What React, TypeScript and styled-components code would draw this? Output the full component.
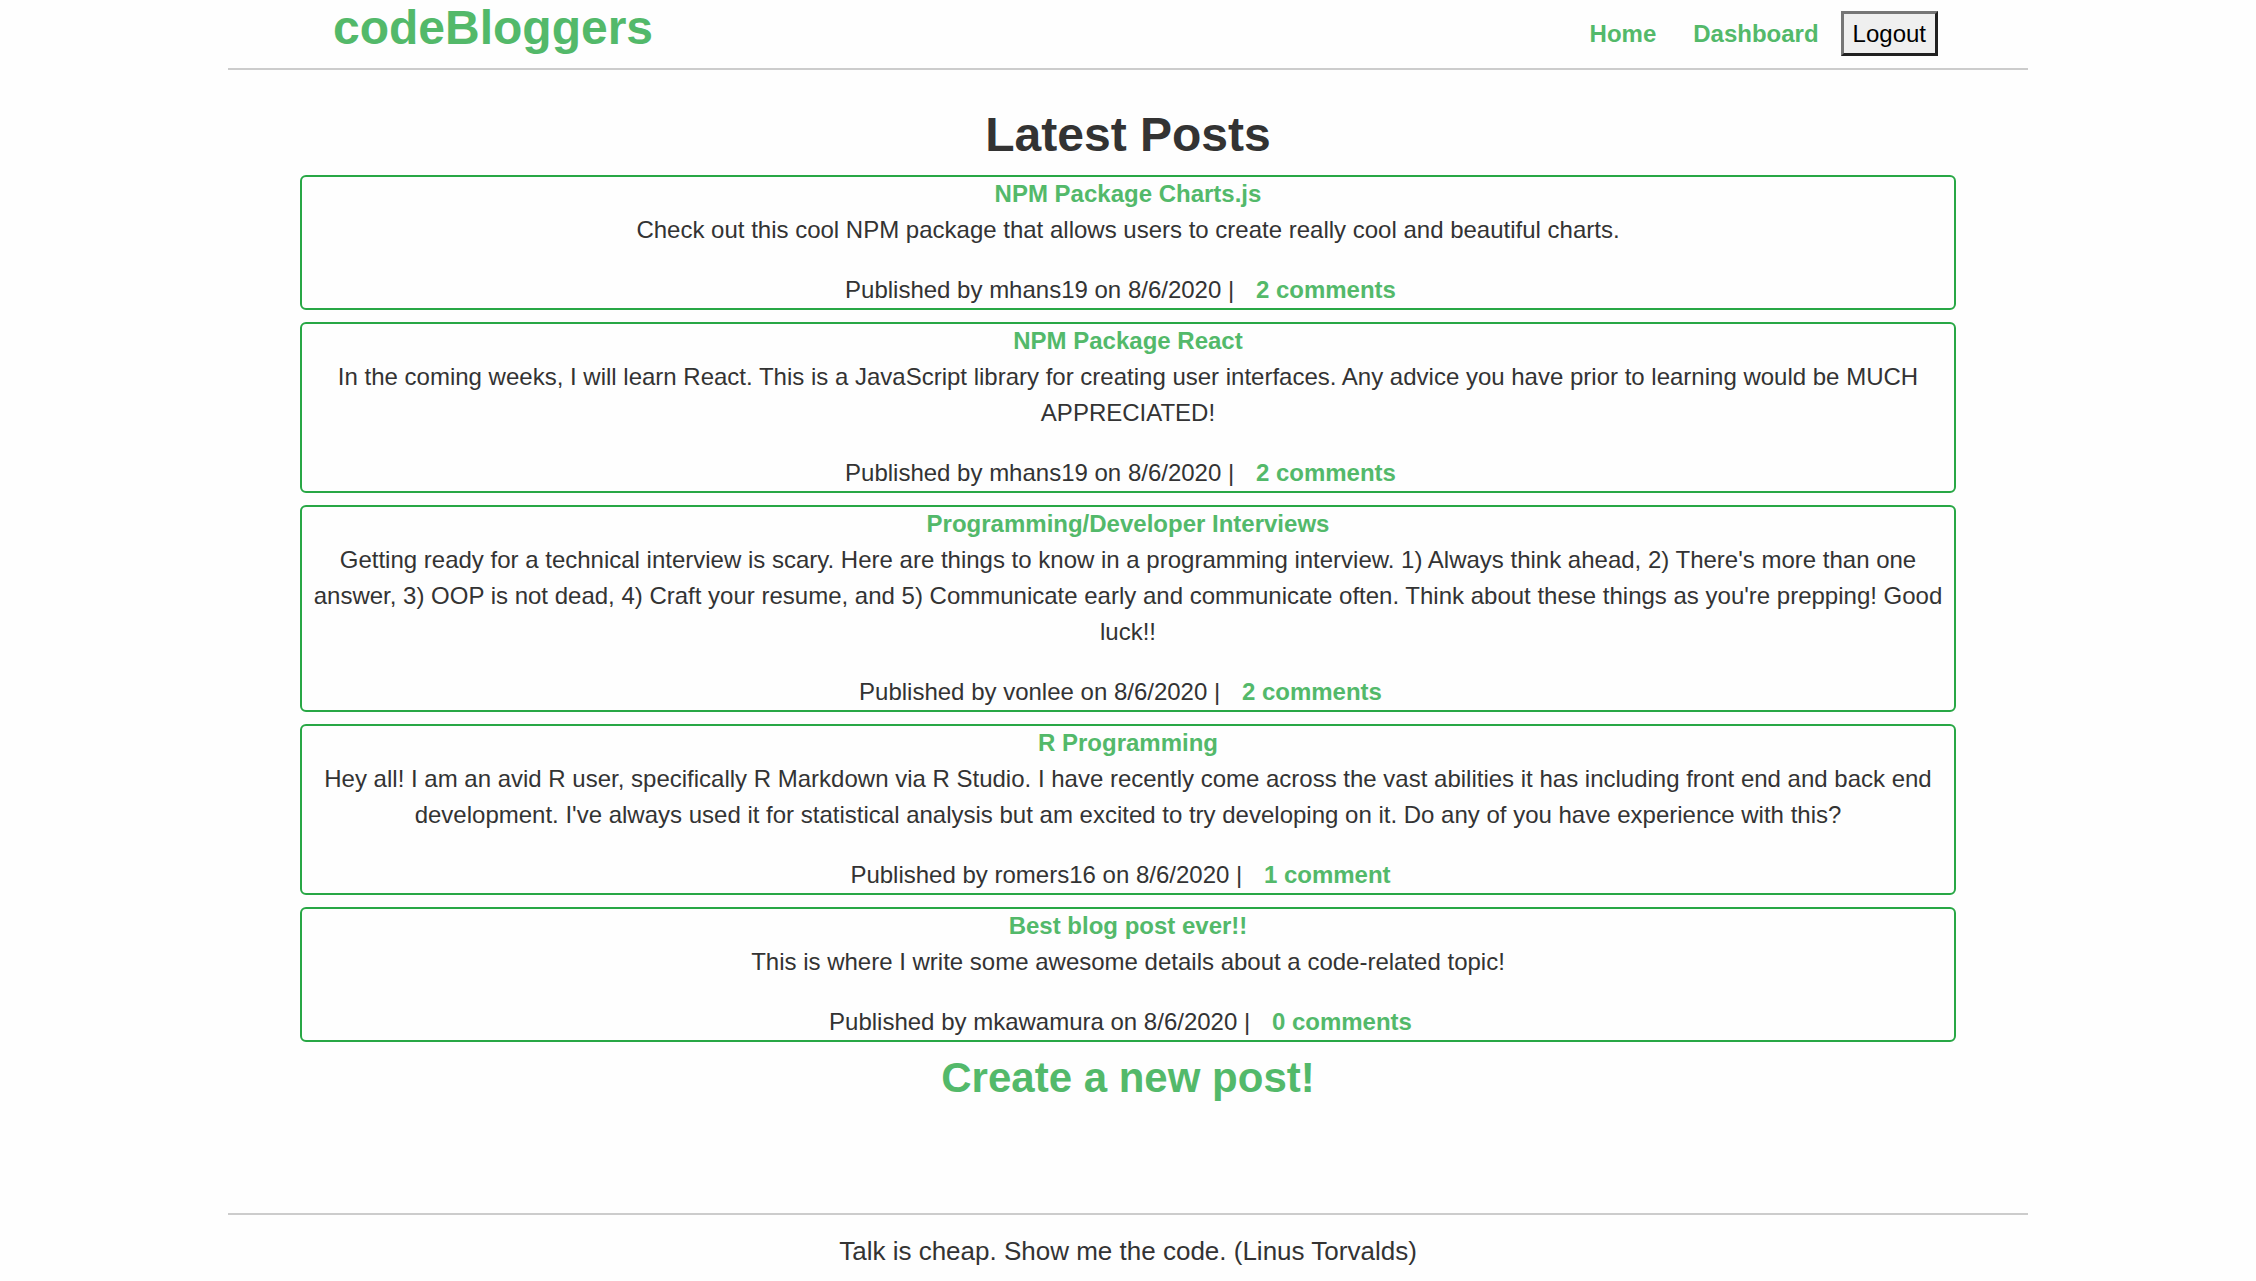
import React from "react";
import styled, { createGlobalStyle } from "styled-components";

const GlobalStyle = createGlobalStyle`
  *, *::before, *::after { box-sizing: border-box; }
  body {
    margin: 0;
    background: #fefefe;
    color: #333;
    font-family: "Liberation Sans", Arial, Helvetica, sans-serif;
    font-size: 24px;
    line-height: 36px;
  }
  h1, h2, p { margin: 0; }
`;

const Wrapper = styled.div`
  display: flex;
  flex-direction: column;
  max-width: 1800px;
  min-height: 100vh;
  margin: 0 auto;
`;

const Header = styled.header`
  display: flex;
  justify-content: space-between;
  align-items: flex-start;
  padding: 0 90px;
  border-bottom: 2px solid #ccc;
`;

const Link = styled.a`
  padding: 0 15px;
  color: #53b96a;
  font-weight: 700;
  text-decoration: none;
`;

const Logo = styled.h1`
  font-size: 48px;
  line-height: 55px;
`;

const Nav = styled.nav`
  display: flex;
  align-items: baseline;
  gap: 7px;
  padding: 11px 0 12px;
`;

const LogoutButton = styled.button`
  padding: 6px 9px;
  border: 3px solid;
  border-color: #767676 #212121 #212121 #767676;
  border-radius: 0;
  background: #efefef;
  color: #000;
  font: inherit;
  line-height: 27px;
`;

const Main = styled.main`
  flex: 1;
  padding: 36px 72px;
  text-align: center;
`;

const PageTitle = styled.h2`
  margin-bottom: 12px;
  font-size: 48px;
  line-height: 57px;
`;

const PostList = styled.div`
  display: grid;
  gap: 12px;
`;

const Post = styled.article`
  padding: 0 6px;
  border: 2px solid #28a745;
  border-radius: 6px;
`;

const PostTitle = styled.h2`
  margin-bottom: 2px;
  font-size: 24px;
  line-height: 33px;
`;

const PostText = styled.p`
  margin-bottom: 24px;
`;

const CreatePost = styled.h2`
  margin-top: 12px;
  font-size: 42px;
  line-height: 48px;
`;

const Footer = styled.footer`
  padding: 18px 0 12px;
  border-top: 2px solid #ccc;
  font-size: 26px;
  text-align: center;
`;

const posts = [
  {
    title: "NPM Package Charts.js",
    text: "Check out this cool NPM package that allows users to create really cool and beautiful charts.",
    author: "mhans19",
    comments: 2,
  },
  {
    title: "NPM Package React",
    text: "In the coming weeks, I will learn React. This is a JavaScript library for creating user interfaces. Any advice you have prior to learning would be MUCH APPRECIATED!",
    author: "mhans19",
    comments: 2,
  },
  {
    title: "Programming/Developer Interviews",
    text: "Getting ready for a technical interview is scary. Here are things to know in a programming interview. 1) Always think ahead, 2) There's more than one answer, 3) OOP is not dead, 4) Craft your resume, and 5) Communicate early and communicate often. Think about these things as you're prepping! Good luck!!",
    author: "vonlee",
    comments: 2,
  },
  {
    title: "R Programming",
    text: "Hey all! I am an avid R user, specifically R Markdown via R Studio. I have recently come across the vast abilities it has including front end and back end development. I've always used it for statistical analysis but am excited to try developing on it. Do any of you have experience with this?",
    author: "romers16",
    comments: 1,
  },
  {
    title: "Best blog post ever!!",
    text: "This is where I write some awesome details about a code-related topic!",
    author: "mkawamura",
    comments: 0,
  },
];

export default function App() {
  return (
    <>
      <GlobalStyle />
      <Wrapper>
        <Header>
          <Logo>
            <Link href="#">codeBloggers</Link>
          </Logo>
          <Nav>
            <Link href="#">Home</Link>
            <Link href="#">Dashboard</Link>
            <LogoutButton type="button">Logout</LogoutButton>
          </Nav>
        </Header>
        <Main>
          <PageTitle>Latest Posts</PageTitle>
          <PostList>
            {posts.map((post) => (
              <Post key={post.title}>
                <PostTitle>
                  <Link href="#">{post.title}</Link>
                </PostTitle>
                <PostText>{post.text}</PostText>
                <p>
                  {`Published by ${post.author} on 8/6/2020 | `}
                  <Link href="#">
                    {`${post.comments} ${post.comments === 1 ? "comment" : "comments"}`}
                  </Link>
                </p>
              </Post>
            ))}
          </PostList>
          <CreatePost>
            <Link href="#">Create a new post!</Link>
          </CreatePost>
        </Main>
        <Footer>Talk is cheap. Show me the code. (Linus Torvalds)</Footer>
      </Wrapper>
    </>
  );
}
